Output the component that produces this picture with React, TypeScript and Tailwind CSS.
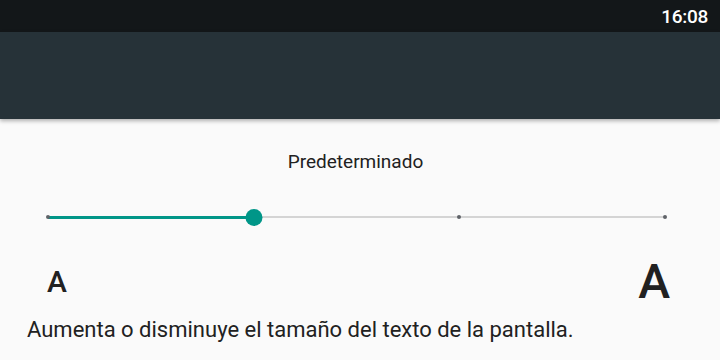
import React from "react";

const TICKS = [0, 1, 2, 3];
const VALUE = 1;

function StatusBar() {
  return (
    <div className="flex h-[32px] items-center justify-end bg-[#131719] pr-[12px]">
      <span className="text-[19px] font-medium leading-none tracking-[-0.3px] text-white">16:08</span>
    </div>
  );
}

function TextSizeSlider() {
  const pct = (VALUE / (TICKS.length - 1)) * 100;
  return (
    <div className="relative mx-[48px] h-[20px] w-[617px]">
      {/* inactive track */}
      <div className="absolute left-0 right-0 top-[9px] h-[2px] bg-[#d4d4d4]" />
      {/* active track */}
      <div className="absolute left-0 top-[8.5px] h-[3px] bg-[#009688]" style={{ width: `${pct}%` }} />
      {TICKS.map((t) => (
        <div
          key={t}
          className="absolute top-[8px] h-[4px] w-[4px] -translate-x-1/2 rounded-full bg-[#5f6368]"
          style={{ left: `${(t / (TICKS.length - 1)) * 100}%` }}
        />
      ))}
      <div
        className="absolute top-[1.5px] h-[17px] w-[17px] -translate-x-1/2 rounded-full bg-[#009688]"
        style={{ left: `${pct}%` }}
      />
    </div>
  );
}

export default function App() {
  return (
    <div className="flex h-[360px] w-[720px] flex-col overflow-hidden bg-[#fafafa] font-['Roboto',sans-serif]">
      <StatusBar />
      <div className="relative z-10 h-[87px] bg-[#263238] shadow-[0_2px_4px_rgba(0,0,0,0.3)]" />

      <div className="flex flex-1 flex-col pt-[31px] text-[#212121]">
        <p className="ml-[-9px] text-center text-[19px] leading-[24px]">Predeterminado</p>

        <div className="mt-[33px]">
          <TextSizeSlider />
        </div>

        <div className="mt-[31px] flex h-[48px] items-center justify-between pl-[47px] pr-[50px]">
          <span className="text-[30px] font-medium leading-[30px]">A</span>
          <span className="text-[48px] font-medium leading-[48px]">A</span>
        </div>

        <p className="mt-[10px] pl-[27px] text-[22px] leading-[28px]">
          Aumenta o disminuye el tamaño del texto de la pantalla.
        </p>
      </div>
    </div>
  );
}
